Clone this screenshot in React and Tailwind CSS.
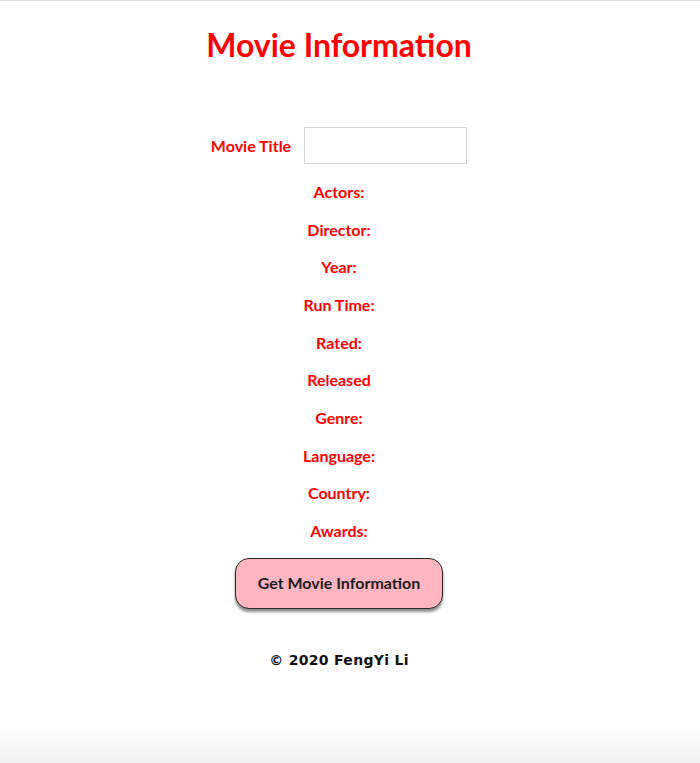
import { useState } from 'react';

const fields = ['Actors:', 'Director:', 'Year:', 'Run Time:', 'Rated:', 'Released', 'Genre:', 'Language:', 'Country:', 'Awards:'];

export default function App() {
  const [title, setTitle] = useState('');

  return (
    <div className="min-h-[763px] border-t border-[#e1e1e4] bg-[linear-gradient(to_bottom,#ffffff_0px,#ffffff_725px,#f0f0f0_763px)] font-['Lato','Noto_Sans',sans-serif]">
      <div className="w-[678px] flex flex-col items-center pt-[24px]">
        <h1 className="text-[32px] leading-[40px] font-bold text-[#ff0000]">Movie Information</h1>

        <div className="mt-[62px] flex items-center gap-[13px]">
          <label className="text-[16px] font-bold text-[#ff0000]">Movie Title</label>
          <input
            type="text"
            value={title}
            onChange={e => setTitle(e.target.value)}
            className="w-[163px] h-[37px] border border-[#d6d6d6] bg-white outline-none px-2 text-sm"
          />
        </div>

        <div className="mt-[9px] flex flex-col items-center">
          {fields.map(f => (
            <div key={f} className="h-[37.7px] flex items-center text-[16px] font-bold text-[#ff0000]">
              {f}
            </div>
          ))}
        </div>

        <button className="mt-[8px] w-[208px] h-[51px] rounded-[14px] border border-[#2a2a2a] bg-[#ffb6c1] shadow-[0_3px_3px_rgba(0,0,0,0.45)] text-[16px] font-bold text-[#1d1d1d]">
          Get Movie Information
        </button>

        <p className="mt-[41px] leading-[20px] text-[14px] font-bold tracking-[0.3px] text-[#111] font-['DejaVu_Sans',sans-serif]">
          © 2020 FengYi Li
        </p>
      </div>
    </div>
  );
}
